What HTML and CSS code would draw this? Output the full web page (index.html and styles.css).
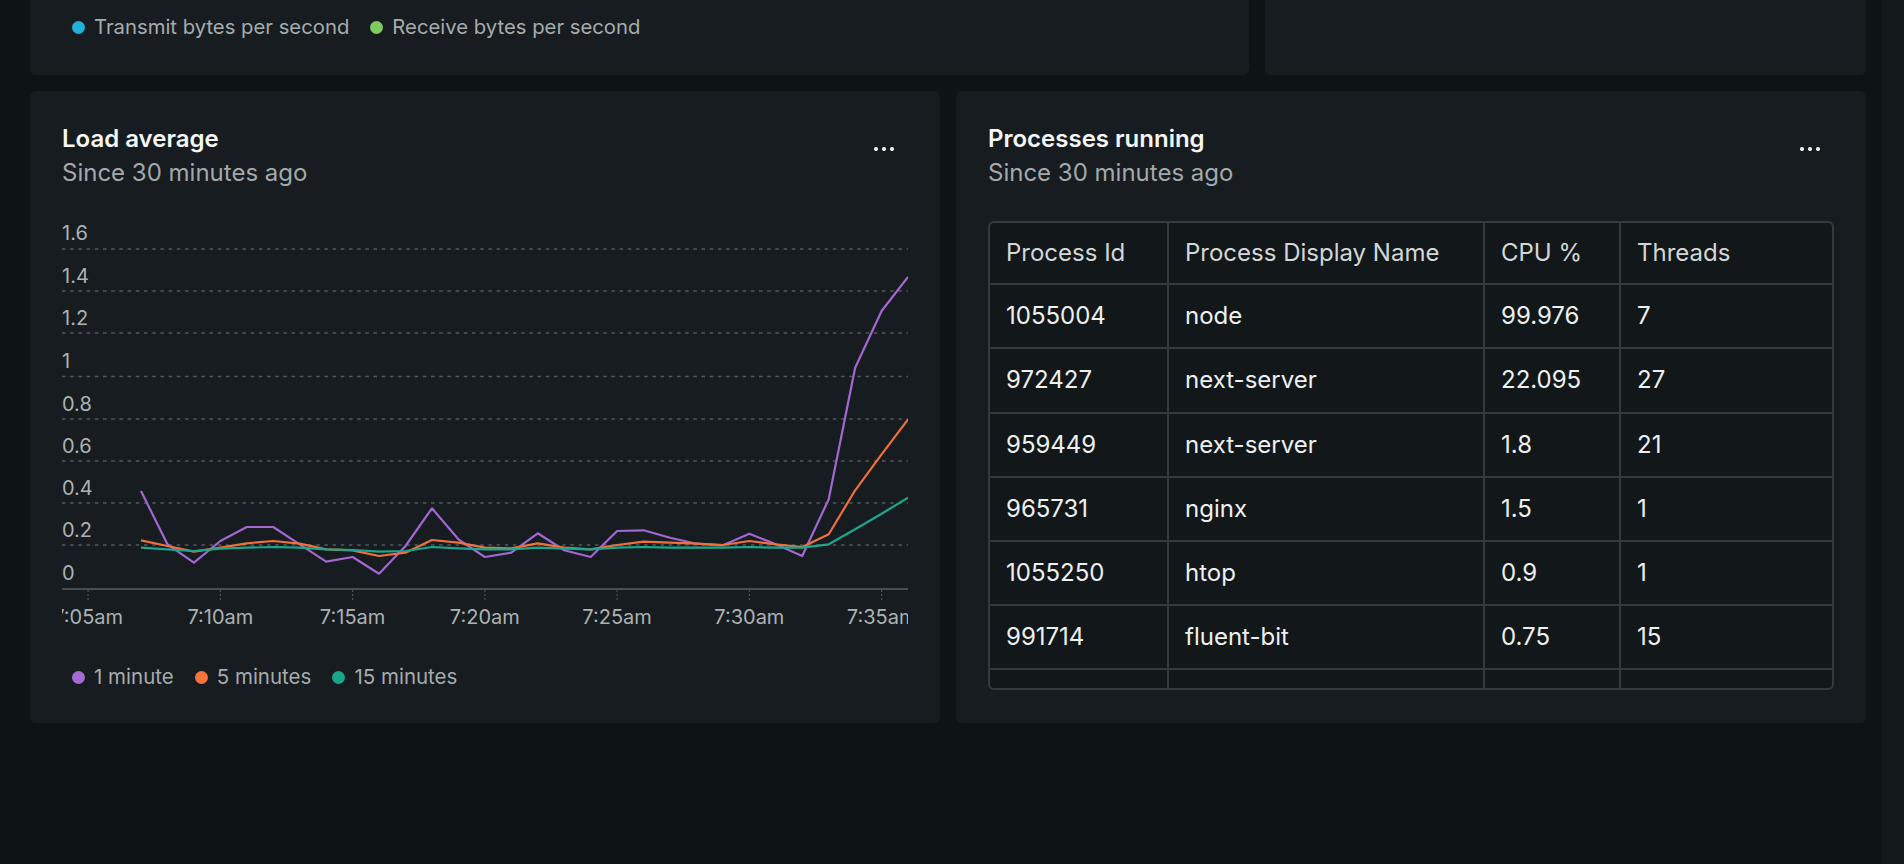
FILE: index.html
```html
<!DOCTYPE html>
<html lang="en">
<head>
<meta charset="utf-8">
<title>Host metrics</title>
<link rel="stylesheet" href="styles.css">
</head>
<body>
<div class="page">
  <main class="main">
    <section class="grid">
      <div class="card card-top span-8">
        <ul class="legend legend-top">
          <li class="legend-item"><span class="dot dot-blue"></span>Transmit bytes per second</li>
          <li class="legend-item"><span class="dot dot-green"></span>Receive bytes per second</li>
        </ul>
      </div>
      <div class="card card-top span-4"></div>

      <div class="card card-main span-6">
        <header class="card-head">
          <div class="titles">
            <h2 class="card-title">Load average</h2>
            <p class="card-sub">Since 30 minutes ago</p>
          </div>
          <button class="more" aria-label="More"><span></span><span></span><span></span></button>
        </header>
        <svg class="chart" width="846" height="412" viewBox="0 0 846 412">
          <g class="grid-lines">
            <line x1="0" x2="846" y1="324" y2="324"/>
            <line x1="0" x2="846" y1="282" y2="282"/>
            <line x1="0" x2="846" y1="240" y2="240"/>
            <line x1="0" x2="846" y1="198" y2="198"/>
            <line x1="0" x2="846" y1="155.5" y2="155.5"/>
            <line x1="0" x2="846" y1="112" y2="112"/>
            <line x1="0" x2="846" y1="70" y2="70"/>
            <line x1="0" x2="846" y1="28" y2="28"/>
          </g>
          <g class="y-labels">
            <text x="0" y="359">0</text>
            <text x="0" y="316">0.2</text>
            <text x="0" y="274">0.4</text>
            <text x="0" y="232">0.6</text>
            <text x="0" y="190">0.8</text>
            <text x="0" y="147">1</text>
            <text x="0" y="104">1.2</text>
            <text x="0" y="62">1.4</text>
            <text x="0" y="19">1.6</text>
          </g>
          <line class="axis" x1="0" x2="846" y1="368" y2="368"/>
          <g class="ticks">
            <line x1="26.1" x2="26.1" y1="369" y2="380"/>
            <line x1="158.35" x2="158.35" y1="369" y2="380"/>
            <line x1="290.6" x2="290.6" y1="369" y2="380"/>
            <line x1="422.85" x2="422.85" y1="369" y2="380"/>
            <line x1="555.1" x2="555.1" y1="369" y2="380"/>
            <line x1="687.35" x2="687.35" y1="369" y2="380"/>
            <line x1="819.6" x2="819.6" y1="369" y2="380"/>
          </g>
          <g class="x-labels">
            <text x="26.1" y="403">7:05am</text>
            <text x="158.35" y="403">7:10am</text>
            <text x="290.6" y="403">7:15am</text>
            <text x="422.85" y="403">7:20am</text>
            <text x="555.1" y="403">7:25am</text>
            <text x="687.35" y="403">7:30am</text>
            <text x="819.6" y="403">7:35am</text>
          </g>
          <polyline class="series s-purple" points="79,270 105.45,323.3 131.9,341.7 158.35,320 184.8,306 211.25,306 237.7,323.3 264.15,340.7 290.6,336 317.05,352.7 343.5,325 369.95,287.3 396.4,318.3 422.85,336 449.3,331.7 475.75,312.3 502.2,329.3 528.65,336 555.1,310 581.55,309.3 608,316.7 634.45,322.7 660.9,324.3 687.35,312.7 713.8,323.3 740.25,335 766.7,278.3 793.15,146.7 819.6,90 846.05,56"/>
          <polyline class="series s-orange" points="79,319.3 105.45,325 131.9,330.7 158.35,326.7 184.8,322.3 211.25,320 237.7,322.7 264.15,328.3 290.6,329.3 317.05,335 343.5,331.7 369.95,319 396.4,321.7 422.85,326.7 449.3,327.3 475.75,322.3 502.2,326.7 528.65,328.3 555.1,324 581.55,320.7 608,321.7 634.45,322.7 660.9,324 687.35,320 713.8,323.3 740.25,326 766.7,313.3 793.15,269.3 819.6,233.3 846.05,198.3"/>
          <polyline class="series s-teal" points="79,326.7 105.45,328.3 131.9,330 158.35,327.7 184.8,326.7 211.25,326 237.7,326.7 264.15,328.3 290.6,329 317.05,330.7 343.5,330 369.95,326 396.4,327.3 422.85,328.3 449.3,328.3 475.75,326.7 502.2,327.7 528.65,328.3 555.1,326.7 581.55,326 608,326.7 634.45,326.7 660.9,326.7 687.35,326 713.8,326.7 740.25,326.7 766.7,323.3 793.15,308.3 819.6,292.7 846.05,276.7"/>
        </svg>
        <ul class="legend legend-bottom">
          <li class="legend-item"><span class="dot dot-purple"></span>1 minute</li>
          <li class="legend-item"><span class="dot dot-orange"></span>5 minutes</li>
          <li class="legend-item"><span class="dot dot-teal"></span>15 minutes</li>
        </ul>
      </div>

      <div class="card card-main span-6">
        <header class="card-head">
          <div class="titles">
            <h2 class="card-title">Processes running</h2>
            <p class="card-sub">Since 30 minutes ago</p>
          </div>
          <button class="more" aria-label="More"><span></span><span></span><span></span></button>
        </header>
        <div class="table-wrap">
          <table class="ptable">
            <colgroup>
              <col class="c1"><col class="c2"><col class="c3"><col class="c4">
            </colgroup>
            <thead>
              <tr><th>Process Id</th><th>Process Display Name</th><th>CPU %</th><th>Threads</th></tr>
            </thead>
            <tbody>
              <tr><td>1055004</td><td>node</td><td>99.976</td><td>7</td></tr>
              <tr><td>972427</td><td>next-server</td><td>22.095</td><td>27</td></tr>
              <tr><td>959449</td><td>next-server</td><td>1.8</td><td>21</td></tr>
              <tr><td>965731</td><td>nginx</td><td>1.5</td><td>1</td></tr>
              <tr><td>1055250</td><td>htop</td><td>0.9</td><td>1</td></tr>
              <tr><td>991714</td><td>fluent-bit</td><td>0.75</td><td>15</td></tr>
              <tr><td></td><td></td><td></td><td></td></tr>
            </tbody>
          </table>
        </div>
      </div>
    </section>
  </main>
  <div class="scrolltrack"></div>
</div>
</body>
</html>
```

FILE: styles.css
```css
* { box-sizing: border-box; }

html, body {
  margin: 0;
  padding: 0;
  height: 100%;
  background: #0e1315;
  font-family: Inter, "Noto Sans", "Liberation Sans", sans-serif;
  color: #eef0f0;
}

.page {
  display: flex;
  width: 1904px;
  height: 864px;
  overflow: hidden;
}

.main {
  flex: 1;
  padding: 0 16px 0 30px;
}

.scrolltrack {
  width: 22px;
  background: #13191b;
}

.grid {
  display: grid;
  grid-template-columns: repeat(12, 1fr);
  grid-template-rows: 75px auto;
  gap: 16px;
}

.span-8 { grid-column: span 8; }
.span-6 { grid-column: span 6; }
.span-4 { grid-column: span 4; }

.card {
  background: #161c1f;
  border-radius: 6px;
}

.card-top {
  border-radius: 0 0 6px 6px;
  padding: 15px 32px 0;
}

.card-main {
  padding: 32px 32px 33px;
  display: flex;
  flex-direction: column;
}

.card-head {
  display: flex;
  justify-content: space-between;
  align-items: flex-start;
  height: 66px;
  margin-bottom: 32px;
}

.card-title {
  margin: 0;
  font-size: 24px;
  line-height: 32px;
  font-weight: 600;
  color: #f5f6f6;
}

.card-sub {
  margin: 2px 0 0;
  font-size: 24px;
  line-height: 32px;
  font-weight: 400;
  color: #a3a9ab;
}

.more {
  width: 48px;
  height: 48px;
  margin-top: 2px;
  padding: 0;
  border: 0;
  background: transparent;
  display: flex;
  align-items: center;
  justify-content: center;
  gap: 4.6px;
  cursor: pointer;
}

.more span {
  width: 3.4px;
  height: 3.4px;
  border-radius: 50%;
  background: #e8eaeb;
}

/* legend */
.legend {
  list-style: none;
  margin: 0;
  padding: 0 0 0 10px;
  display: flex;
  gap: 21px;
}

.legend-item {
  display: flex;
  align-items: center;
  gap: 9px;
  font-size: 20.5px;
  line-height: 24px;
  color: #a6acae;
}

.legend-top .legend-item { font-size: 20.3px; }

.legend-bottom { margin-top: 32px; }

.dot {
  width: 13px;
  height: 13px;
  border-radius: 50%;
  flex: none;
}

.dot-blue { background: #1fb0dc; }
.dot-green { background: #7fcb5b; }
.dot-purple { background: #a66bd3; }
.dot-orange { background: #f5733c; }
.dot-teal { background: #19a58c; }

/* chart */
.chart {
  display: block;
  overflow: hidden;
}

.grid-lines line {
  stroke: #50585a;
  stroke-width: 1.5;
  stroke-dasharray: 3.5 4.7;
}

.axis {
  stroke: #465052;
  stroke-width: 2;
}

.ticks line {
  stroke: #4a5355;
  stroke-width: 1.2;
  stroke-dasharray: 2 2;
}

.y-labels text,
.x-labels text {
  font-family: Inter, "Noto Sans", sans-serif;
  font-size: 20px;
  fill: #acb2b4;
}

.x-labels text { text-anchor: middle; }

.series {
  fill: none;
  stroke-width: 2.2;
  stroke-linejoin: round;
}

.s-purple { stroke: #a267d2; }
.s-orange { stroke: #f0703b; }
.s-teal { stroke: #1ba68d; }

/* table */
.table-wrap {
  height: 469px;
  border: 2px solid #333b3e;
  border-radius: 6px;
  overflow: hidden;
  background: #12181a;
}

.ptable {
  width: 842px;
  border-collapse: separate;
  border-spacing: 0;
  table-layout: fixed;
  font-size: 24px;
}

.c1 { width: 179px; }
.c2 { width: 316px; }
.c3 { width: 136px; }
.c4 { width: 211px; }

.ptable th,
.ptable td {
  text-align: left;
  padding: 16px;
  line-height: 30.2px;
  border-right: 2px solid #333b3e;
  border-bottom: 2px solid #333b3e;
  white-space: nowrap;
}

.ptable th:last-child,
.ptable td:last-child { border-right: 0; }

.ptable th {
  padding: 15px 16px;
  font-weight: 400;
  color: #d3d7d8;
}

.ptable td {
  color: #eef0f0;
}
```
